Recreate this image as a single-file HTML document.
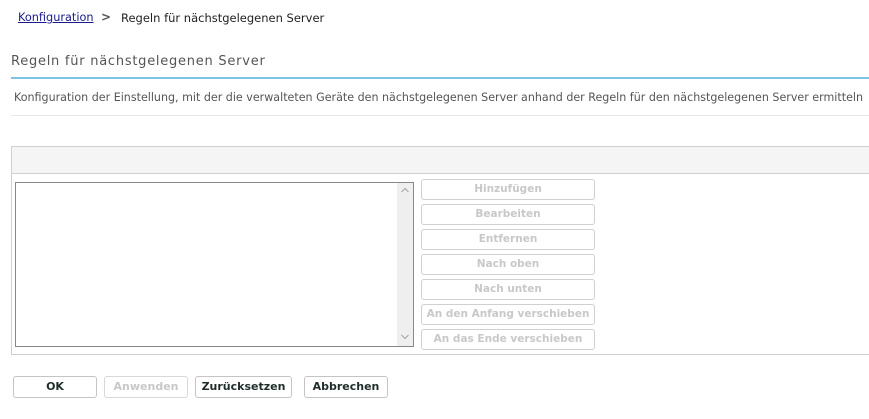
<!DOCTYPE html>
<html><head><meta charset="utf-8"><style>
body{margin:0;width:869px;height:419px;background:#fff;font-family:"DejaVu Sans","Liberation Sans",sans-serif;position:relative;overflow:hidden}
.a{position:absolute;white-space:nowrap}
.btn{position:absolute;border:1px solid #d0d0d0;border-radius:3px;background:#fff;font-size:10.5px;font-weight:bold;text-align:center;box-sizing:border-box;line-height:19px;color:#c8c8c8}
.side{left:421px;width:174px;height:21px}
.bot{top:376px;height:22px;line-height:20px;color:#1f2d2a;border-color:#c4c4c4;font-size:11px}
</style></head><body>
<div class="a" style="left:18px;top:11px;font-size:11.3px;color:#1a1a8c;text-decoration:underline">Konfiguration</div>
<div class="a" style="left:101px;top:10px;font-size:12px;color:#555;font-weight:bold">&gt;</div>
<div class="a" style="left:121px;top:11px;font-size:11.5px;color:#222">Regeln für nächstgelegenen Server</div>
<div class="a" style="left:11px;top:54px;font-size:13px;color:#555;letter-spacing:0.75px">Regeln für nächstgelegenen Server</div>
<div class="a" style="left:11px;top:77px;width:858px;height:2px;background:#7cc4e6"></div>
<div class="a" style="left:14px;top:91px;font-size:11.1px;color:#555">Konfiguration der Einstellung, mit der die verwalteten Geräte den nächstgelegenen Server anhand der Regeln für den nächstgelegenen Server ermitteln</div>
<div class="a" style="left:11px;top:115px;width:858px;height:1px;background:#e8e8e8"></div>
<div class="a" style="left:11px;top:146px;width:870px;height:209px;border:1px solid #d0d0d0;box-sizing:border-box"></div>
<div class="a" style="left:12px;top:147px;width:858px;height:26px;background:#f5f5f5;border-bottom:1px solid #d0d0d0"></div>
<div class="a" style="left:15px;top:182px;width:399px;height:165px;border:1px solid #888;box-sizing:border-box"></div>
<div class="a" style="left:397px;top:183px;width:16px;height:163px;background:#efefef"></div>
<svg class="a" style="left:400px;top:186px" width="10" height="8"><path d="M1.5 6 L5 2.5 L8.5 6" fill="none" stroke="#aaa" stroke-width="1.2"/></svg>
<svg class="a" style="left:400px;top:333px" width="10" height="8"><path d="M1.5 2 L5 5.5 L8.5 2" fill="none" stroke="#aaa" stroke-width="1.2"/></svg>
<div class="btn side" style="top:179px">Hinzufügen</div>
<div class="btn side" style="top:204px">Bearbeiten</div>
<div class="btn side" style="top:229px">Entfernen</div>
<div class="btn side" style="top:254px">Nach oben</div>
<div class="btn side" style="top:279px">Nach unten</div>
<div class="btn side" style="top:304px">An den Anfang verschieben</div>
<div class="btn side" style="top:329px">An das Ende verschieben</div>
<div class="btn bot" style="left:13px;width:84px">OK</div>
<div class="btn bot" style="left:104px;width:84px;color:#c8c8c8;border-color:#d8d8d8">Anwenden</div>
<div class="btn bot" style="left:195px;width:97px">Zurücksetzen</div>
<div class="btn bot" style="left:304px;width:84px">Abbrechen</div>
</body></html>
